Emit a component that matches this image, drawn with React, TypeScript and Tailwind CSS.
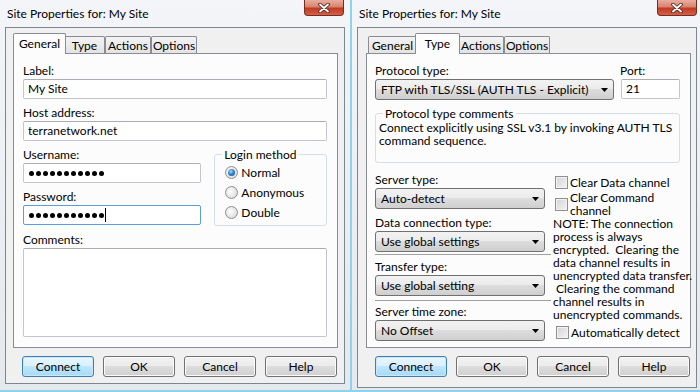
import type { ReactNode } from "react";

// shared win7 gradients
const btnGrad =
  "bg-[linear-gradient(to_bottom,#f2f2f2_0%,#ebebeb_49%,#dddddd_50%,#cfcfcf_100%)]";

function Label({ children, className = "" }: { children: ReactNode; className?: string }) {
  return <div className={`h-[15px] leading-[15px] mb-[1px] whitespace-nowrap ${className}`}>{children}</div>;
}

function TextBox({
  children,
  focused,
  className = "",
}: {
  children?: ReactNode;
  focused?: boolean;
  className?: string;
}) {
  return (
    <div
      className={`h-[20px] rounded-[2px] border bg-white flex items-center pl-[4px] whitespace-nowrap ${
        focused ? "border-[#5a9ee0]" : "border-[#c3c6cc] border-t-[#abadb3]"
      } ${className}`}
    >
      {children}
    </div>
  );
}

function Dots({ count }: { count: number }) {
  return (
    <div className="flex gap-[2px] pl-[1px]">
      {Array.from({ length: count }).map((_, i) => (
        <span key={i} className="w-[5px] h-[5px] rounded-full bg-black" />
      ))}
    </div>
  );
}

function Combo({ children, className = "" }: { children: ReactNode; className?: string }) {
  return (
    <div
      className={`h-[21px] rounded-[3px] border border-[#707070] ${btnGrad} flex items-center pl-[5px] pr-[5px] ${className}`}
    >
      <span className="flex-1 whitespace-nowrap overflow-hidden">{children}</span>
      <svg width="7" height="4" viewBox="0 0 7 4">
        <path d="M0 0H7L3.5 4Z" fill="#000" />
      </svg>
    </div>
  );
}

function Btn({ children, primary }: { children: ReactNode; primary?: boolean }) {
  return (
    <div
      className={`w-[72px] h-[21px] rounded-[3px] border flex items-center justify-center ${
        primary
          ? "border-[#3c7fb1] bg-[linear-gradient(to_bottom,#eaf6fd_0%,#d9f0fc_49%,#bee6fd_50%,#a7d9f5_100%)] shadow-[inset_0_0_0_1px_#c8e8f8]"
          : `border-[#707070] ${btnGrad} shadow-[inset_0_0_0_1px_#fbfbfb]`
      }`}
    >
      {children}
    </div>
  );
}

function Radio({ checked, label }: { checked?: boolean; label: string }) {
  return (
    <div className="h-[20px] flex items-center gap-[3px]">
      <div className="w-[13px] h-[13px] rounded-full border border-[#8e8f8f] bg-[radial-gradient(circle_at_40%_40%,#ffffff_0%,#e4e4e4_60%,#cfcfcf_100%)] flex items-center justify-center">
        {checked && (
          <div className="w-[7px] h-[7px] rounded-full bg-[radial-gradient(circle_at_40%_35%,#9fd9ff_0%,#2f7cc9_50%,#144f8c_100%)]" />
        )}
      </div>
      <span className="leading-[15px]">{label}</span>
    </div>
  );
}

function Check() {
  return (
    <div className="w-[13px] h-[13px] shrink-0 border border-[#8f8f8f] bg-[linear-gradient(135deg,#d2d4d8_0%,#f4f4f4_100%)] shadow-[inset_0_0_0_1px_#f2f2f2]" />
  );
}

function CloseButton() {
  return (
    <div className="w-[40px] h-[16px] rounded-b-[4px] border border-t-0 border-[#7c2a1d] bg-[linear-gradient(to_bottom,#e9ad9e_0%,#d88470_45%,#c23a22_55%,#d2604a_100%)] flex items-center justify-center">
      <svg width="12" height="10" viewBox="0 0 12 10">
        <path d="M2 1.5L10 8.5M10 1.5L2 8.5" stroke="#4a2a26" strokeWidth="3.6" strokeLinecap="round" />
        <path d="M2 1.5L10 8.5M10 1.5L2 8.5" stroke="#ffffff" strokeWidth="1.8" strokeLinecap="round" />
      </svg>
    </div>
  );
}

const tabList = [
  { name: "General", w: "w-[49px]", wa: "w-[53px]" },
  { name: "Type", w: "w-[41px]", wa: "w-[45px]" },
  { name: "Actions", w: "w-[46px]", wa: "w-[50px]" },
  { name: "Options", w: "w-[46px]", wa: "w-[50px]" },
];

function Tabs({ active }: { active: string }) {
  return (
    <div className="flex items-end h-[20px] pl-[2px]">
      {tabList.map((t) =>
        t.name === active ? (
          <div
            key={t.name}
            className={`${t.wa} relative z-10 -mx-[2px] -mb-[1px] h-[21px] border border-b-0 border-[#898c95] rounded-t-[2px] bg-[#fcfcfc] pt-[2px] text-center leading-[15px]`}
          >
            {t.name}
          </div>
        ) : (
          <div
            key={t.name}
            className={`${t.w} h-[17px] border border-b-0 border-[#898c95] rounded-t-[2px] bg-[linear-gradient(to_bottom,#f3f3f3,#e3e3e3)] pt-[1px] text-center leading-[15px]`}
          >
            {t.name}
          </div>
        )
      )}
    </div>
  );
}

function Buttons() {
  return (
    <div className="flex gap-[9px] mt-[8px] pl-[9px]">
      <Btn primary>Connect</Btn>
      <Btn>OK</Btn>
      <Btn>Cancel</Btn>
      <Btn>Help</Btn>
    </div>
  );
}

function TitleBar() {
  return (
    <div className="h-[27px] flex items-start justify-between">
      <span className="pl-[2px] pt-[6px] leading-[15px]">Site Properties for: My Site</span>
      <CloseButton />
    </div>
  );
}

function GeneralPanel() {
  return (
    <div className="w-[325px] h-[295px] border border-[#898c95] bg-[#fcfcfc] pl-[9px] pr-[10px] pt-[9px] flex flex-col">
      <Label>Label:</Label>
      <TextBox>My Site</TextBox>
      <Label className="mt-[6px]">Host address:</Label>
      <TextBox>terranetwork.net</TextBox>
      <div className="mt-[6px] flex gap-[13px]">
        <div className="w-[179px] flex flex-col">
          <Label>Username:</Label>
          <TextBox>
            <Dots count={11} />
          </TextBox>
          <Label className="mt-[6px]">Password:</Label>
          <TextBox focused>
            <Dots count={11} />
            <span className="ml-[1px] w-px h-[14px] bg-black" />
          </TextBox>
        </div>
        <fieldset className="w-[113px] h-[79px] border border-[#d5dfe5] rounded-[3px] pl-[10px] pt-0">
          <legend className="ml-[-3px] px-[2px] leading-[15px]">Login method</legend>
          <Radio checked label="Normal" />
          <Radio label="Anonymous" />
          <Radio label="Double" />
        </fieldset>
      </div>
      <Label className="mt-[6px]">Comments:</Label>
      <div className="h-[89px] rounded-[2px] border border-[#c3c6cc] border-t-[#abadb3] bg-white" />
    </div>
  );
}

const noteLines = [
  "NOTE: The connection",
  "process is always",
  "encrypted.  Clearing the",
  "data channel results in",
  "unencrypted data transfer.",
  " Clearing the command",
  "channel results in",
  "unencrypted commands.",
];

function TypePanel() {
  return (
    <div className="w-[325px] h-[295px] border border-[#898c95] bg-[#fcfcfc] pl-[8px] pt-[9px] flex flex-col">
      <div className="flex">
        <div className="w-[239px] flex flex-col">
          <Label>Protocol type:</Label>
          <Combo>FTP with TLS/SSL (AUTH TLS - Explicit)</Combo>
        </div>
        <div className="ml-[6px] flex flex-col">
          <Label>Port:</Label>
          <TextBox className="ml-[1px] w-[59px]">21</TextBox>
        </div>
      </div>
      <fieldset className="mt-[6px] w-[305px] h-[57px] border border-[#d5dfe5] rounded-[3px] pl-[3px]">
        <legend className="ml-[4px] px-[2px] leading-[15px]">Protocol type comments</legend>
        <div className="leading-[13px] whitespace-nowrap">
          <div>Connect explicitly using SSL v3.1 by invoking AUTH TLS</div>
          <div>command sequence.</div>
        </div>
      </fieldset>
      <div className="mt-[9px] flex">
        <div className="w-[170px] flex flex-col">
          <Label>Server type:</Label>
          <Combo>Auto-detect</Combo>
          <Label className="mt-[6px]">Data connection type:</Label>
          <Combo>Use global settings</Combo>
          <div className="mt-[2px] w-[176px] h-px bg-[#a0a0a0]" />
          <Label className="mt-[4px]">Transfer type:</Label>
          <Combo>Use global setting</Combo>
          <div className="mt-[4px] w-[176px] h-px bg-[#a0a0a0]" />
          <Label className="mt-[3px]">Server time zone:</Label>
          <Combo>No Offset</Combo>
        </div>
        <div className="ml-[8px] flex flex-col pt-[3px] whitespace-nowrap">
          <div className="h-[14px] flex items-center gap-[2px] pl-[2px]">
            <Check />
            <span className="leading-[13px]">Clear Data channel</span>
          </div>
          <div className="mt-[2px] flex items-center gap-[2px] pl-[2px]">
            <Check />
            <div className="leading-[13px]">
              <div>Clear Command</div>
              <div>channel</div>
            </div>
          </div>
          <div className="leading-[13px] whitespace-pre">
            {noteLines.map((l) => (
              <div key={l}>{l}</div>
            ))}
          </div>
          <div className="mt-[5px] h-[13px] flex items-center gap-[2px] pl-[3px]">
            <Check />
            <span className="leading-[13px]">Automatically detect</span>
          </div>
        </div>
      </div>
    </div>
  );
}

export default function App() {
  return (
    <div className="w-[700px] h-[392px] flex overflow-hidden bg-[#e8edf2] text-[12px] text-black font-['Lato',sans-serif]">
      {/* left dialog */}
      <div className="w-[351px] h-full flex flex-col px-[5px] border-r border-b-2 border-[#8fd2ee] bg-[linear-gradient(to_bottom,#f3f5f8,#e4e9ee)]">
        <div className="flex items-start justify-between">
          <span className="pl-[2px] pt-[6px] leading-[15px]">Site Properties for: My Site</span>
          <div className="mr-[1px]">
            <CloseButton />
          </div>
        </div>
        <div className="mt-[6px] h-[357px] border border-[#7d8792] bg-[#f0f0f0] pl-[7px] pt-[5px] flex flex-col">
          <Tabs active="General" />
          <GeneralPanel />
          <Buttons />
        </div>
      </div>
      {/* right dialog */}
      <div className="w-[349px] h-full flex flex-col pl-[5px] pr-[3px] border-l border-b-2 border-[#8fd2ee] bg-[linear-gradient(to_bottom,#f3f5f8,#e4e9ee)]">
        <TitleBar />
        <div className="h-[361px] border border-[#7d8792] bg-[#f0f0f0] pl-[8px] pt-[5px] flex flex-col">
          <Tabs active="Type" />
          <TypePanel />
          <Buttons />
        </div>
      </div>
    </div>
  );
}
